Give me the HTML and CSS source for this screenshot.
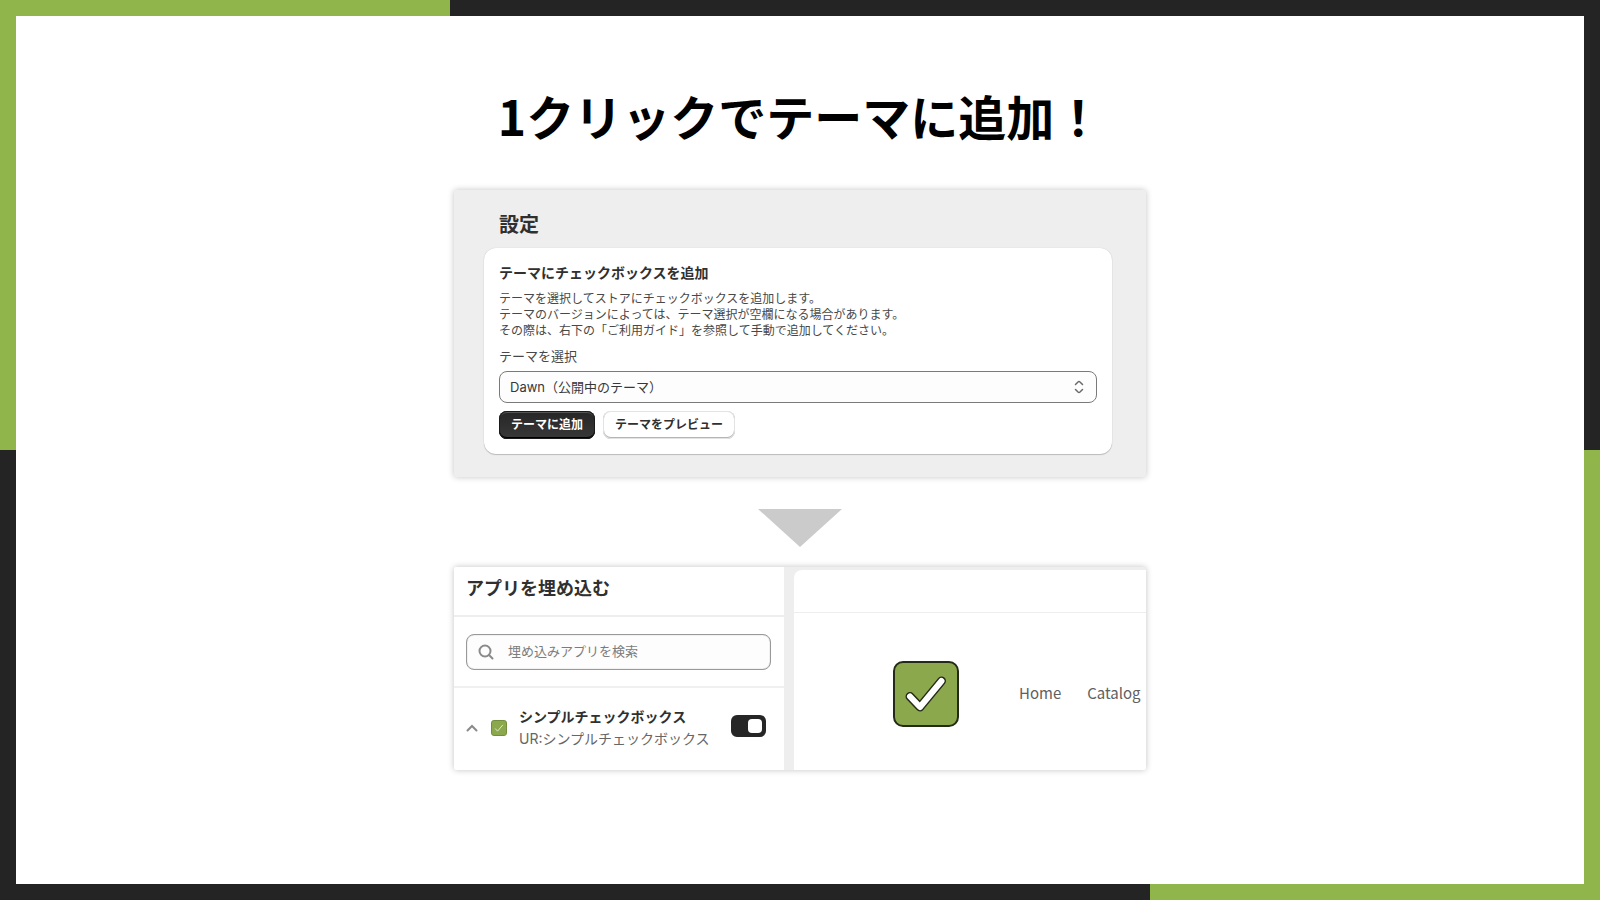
FILE: index.html
```html
<!DOCTYPE html>
<html lang="ja">
<head>
    <meta charset="UTF-8">
    <meta name="viewport" content="width=device-width, initial-scale=1.0">
    <title>1クリックでテーマに追加！</title>
    <link rel="stylesheet" href="styles.css">
</head>
<body>
    <main class="slide">
        <h1>1クリックでテーマに追加！</h1>

        <section class="shot settings">
            <h2>設定</h2>
            <form class="settings-card">
                <h3>テーマにチェックボックスを追加</h3>
                <p>
                    テーマを選択してストアにチェックボックスを追加します。<br>
                    テーマのバージョンによっては、テーマ選択が空欄になる場合があります。<br>
                    その際は、右下の「ご利用ガイド」を参照して手動で追加してください。
                </p>
                <label for="themeSelect">テーマを選択</label>
                <div class="select-wrap">
                    <select id="themeSelect">
                        <option>Dawn（公開中のテーマ）</option>
                    </select>
                    <svg class="select-icon" width="10" height="14" viewBox="0 0 10 14" aria-hidden="true">
                        <path d="M1.5 4.5 4 2Q5 1.200 6 2L8.500 4.500M1.500 9.500 4 12Q5 12.800 6 12L8.500 9.500"/>
                    </svg>
                </div>
                <div class="buttons">
                    <button type="button" class="btn btn-primary">テーマに追加</button>
                    <button type="button" class="btn">テーマをプレビュー</button>
                </div>
            </form>
        </section>

        <svg class="arrow" width="84" height="38" viewBox="0 0 84 38" aria-hidden="true">
            <path d="M0 0H84L42 38Z"/>
        </svg>

        <section class="shot editor">
            <div class="embed-panel">
                <h2>アプリを埋め込む</h2>
                <div class="search-section">
                    <div class="search-box">
                        <svg width="16" height="16" viewBox="0 0 16 16" aria-hidden="true">
                            <circle cx="7" cy="7" r="5.500"/>
                            <path d="M11 11 14.500 14.500"/>
                        </svg>
                        <input type="text" class="search-input" placeholder="埋め込みアプリを検索" aria-label="埋め込みアプリを検索">
                    </div>
                </div>
                <div class="app-row">
                    <svg class="chevron" width="12" height="8" viewBox="0 0 12 8" aria-hidden="true">
                        <path d="M1.500 6.500 6 2 10.500 6.500"/>
                    </svg>
                    <svg class="app-icon" width="16" height="16" viewBox="0 0 66 66" aria-hidden="true">
                        <rect class="mini-box" x="2" y="2" width="62" height="62" rx="10"/>
                        <path class="mini-check" d="M17 35 27 46 49 20"/>
                    </svg>
                    <label class="app-name" for="embedToggle">
                        <strong>シンプルチェックボックス</strong>
                        <span>UR:シンプルチェックボックス</span>
                    </label>
                    <input type="checkbox" class="toggle" id="embedToggle" checked>
                </div>
            </div>

            <div class="preview">
                <div class="preview-bar"></div>
                <div class="store-header">
                    <svg width="66" height="66" viewBox="0 0 66 66" role="img" aria-label="ロゴ">
                        <rect class="logo-box" x="1" y="1" width="64" height="64" rx="9"/>
                        <path class="logo-outline" d="M17 35.500 27 46 48.500 20"/>
                        <path class="logo-check" d="M17 35.500 27 46 48.500 20"/>
                    </svg>
                    <nav>
                        <a href="#">Home</a>
                        <a href="#">Catalog</a>
                    </nav>
                </div>
            </div>
        </section>
    </main>
</body>
</html>
```
FILE: styles.css
```css
* {
    margin: 0;
    padding: 0;
    box-sizing: border-box;
}

/* two-tone frame: green corners over dark */
body {
    font-family: 'Noto Sans CJK JP', sans-serif;
    color: #303030;
    background:
        linear-gradient(#90b54b, #90b54b) left top / 450px 450px no-repeat,
        linear-gradient(#90b54b, #90b54b) right bottom / 450px 450px no-repeat,
        #242424;
    min-height: 100vh;
    padding: 16px;
    display: flex;
}

.slide {
    flex: 1;
    background: #fff;
    padding: 67px 24px;
    display: flex;
    flex-direction: column;
    align-items: center;
}

h1 {
    color: #000;
    font-size: 48px;
    line-height: 64px;
    margin-bottom: 43px;
}

.shot {
    width: 100%;
    max-width: 692px;
    border-radius: 2px;
    box-shadow: 0 0 6px rgba(0, 0, 0, 0.24);
    background: #eee;
}

.settings {
    padding: 22px 34px 23px 30px;
}

.settings h2 {
    font-size: 20px;
    line-height: 24px;
    margin: 0 0 12px 15px;
}

.settings-card {
    background: #fff;
    border-radius: 12px;
    padding: 14px 15px 15px;
    box-shadow: 0 1px 1px rgba(0, 0, 0, 0.2), 0 0 1px rgba(0, 0, 0, 0.2);
}

.settings-card h3 {
    font-size: 14px;
    line-height: 20px;
    margin-bottom: 8px;
}

.settings-card p {
    color: #484848;
    font-size: 12px;
    line-height: 16px;
    margin-bottom: 9px;
}

.settings-card label {
    display: block;
    color: #484848;
    font-size: 13px;
    line-height: 18px;
    margin-bottom: 6px;
}

.select-wrap {
    position: relative;
    margin-bottom: 8px;
}

.select-wrap select {
    appearance: none;
    width: 100%;
    height: 32px;
    padding: 0 10px;
    border: 1px solid #7a7a7a;
    border-radius: 8px;
    background: #fdfdfd;
    color: #383838;
    font-family: Inter, 'Noto Sans CJK JP', sans-serif;
    font-size: 13px;
}

.select-icon {
    position: absolute;
    right: 13px;
    top: 9px;
    fill: none;
    stroke: #6a6a6a;
    stroke-width: 1.5;
    stroke-linecap: round;
    pointer-events: none;
}

.buttons {
    display: flex;
    gap: 8px;
}

.btn {
    height: 28px;
    padding: 0 12px 2px;
    border: none;
    border-radius: 8px;
    background: #fff;
    color: #303030;
    font-family: inherit;
    font-size: 12px;
    font-weight: 700;
    line-height: 16px;
    box-shadow: inset 0 0 0 1px #e3e3e3, inset 0 -1px 0 1px #b5b5b5;
}

.btn-primary {
    background: linear-gradient(#262626, #383838);
    color: #fff;
    box-shadow: inset 0 0 0 1px #1a1a1a, inset 0 2px 0 #555, inset 0 -2px 0 #000;
}

.arrow {
    fill: #cbcbcb;
    margin: 32px 0 20px;
}

.editor {
    display: grid;
    grid-template-columns: 330fr 352fr;
    column-gap: 10px;
    overflow: hidden;
}

.embed-panel {
    background: #fff;
}

.embed-panel h2 {
    font-size: 18px;
    line-height: 24px;
    padding: 8px 12px 16px;
    border-bottom: 2px solid #eee;
}

.search-section {
    padding: 17px 13px 16px 12px;
    border-bottom: 2px solid #f0f0f0;
}

.search-box {
    display: flex;
    align-items: center;
    gap: 14px;
    height: 36px;
    padding: 0 11px;
    border: 1px solid #999;
    border-radius: 8px;
    background: #fdfdfd;
    box-shadow: inset 0 0 1px #888;
}

.search-box svg {
    fill: none;
    stroke: #8a8a8a;
    stroke-width: 2;
    stroke-linecap: round;
}

.search-input {
    flex: 1;
    min-width: 0;
    padding-bottom: 3px;
    border: none;
    outline: none;
    background: none;
    font-family: inherit;
    font-size: 13px;
}

.search-input::placeholder {
    color: #7c7c7c;
}

.app-row {
    display: flex;
    align-items: center;
    padding: 18px 18px 20px 12px;
}

.chevron {
    margin-right: 13px;
    fill: none;
    stroke: #8a8a8a;
    stroke-width: 2;
    stroke-linecap: round;
}

.app-icon {
    margin-right: 12px;
}

.mini-box {
    fill: #8ba84c;
    stroke: #6f8a3a;
    stroke-width: 4;
}

.mini-check {
    fill: none;
    stroke: #dfe8cc;
    stroke-width: 4;
}

.app-name {
    flex: 1;
    font-family: Inter, 'Noto Sans CJK JP', sans-serif;
    font-size: 14px;
    line-height: 22px;
    white-space: nowrap;
}

.app-name strong,
.app-name span {
    display: block;
}

.app-name span {
    color: #666;
}

.toggle {
    appearance: none;
    display: flex;
    justify-content: flex-end;
    width: 35px;
    height: 22px;
    padding: 4px;
    border-radius: 6px;
    background: #262626;
    margin-bottom: 4px;
}

.toggle::before {
    content: "";
    width: 14px;
    height: 14px;
    border-radius: 4px;
    background: #fff;
}

.toggle:not(:checked) {
    justify-content: flex-start;
    background: #999;
}

.preview {
    background: #fff;
    margin-top: 3px;
    border-top-left-radius: 8px;
    overflow: hidden;
}

.preview-bar {
    height: 43px;
    border-bottom: 1px solid #eee;
}

.store-header {
    display: flex;
    align-items: center;
    gap: 60px;
    padding: 48px 0 43px 99px;
}

.store-header svg {
    flex: none;
}

.logo-box {
    fill: #8ba84c;
    stroke: #232b16;
    stroke-width: 2;
}

.logo-outline,
.logo-check {
    fill: none;
    stroke-linecap: round;
    stroke-linejoin: round;
}

.logo-outline {
    stroke: #232b16;
    stroke-width: 9;
}

.logo-check {
    stroke: #fff;
    stroke-width: 6;
}

.store-header nav {
    display: flex;
    gap: 26px;
    padding-bottom: 2px;
}

.store-header a {
    color: #606060;
    font-size: 15px;
    line-height: 20px;
    text-decoration: none;
}

@media (max-width: 600px) {
    .editor {
        grid-template-columns: 1fr;
    }
}
```
